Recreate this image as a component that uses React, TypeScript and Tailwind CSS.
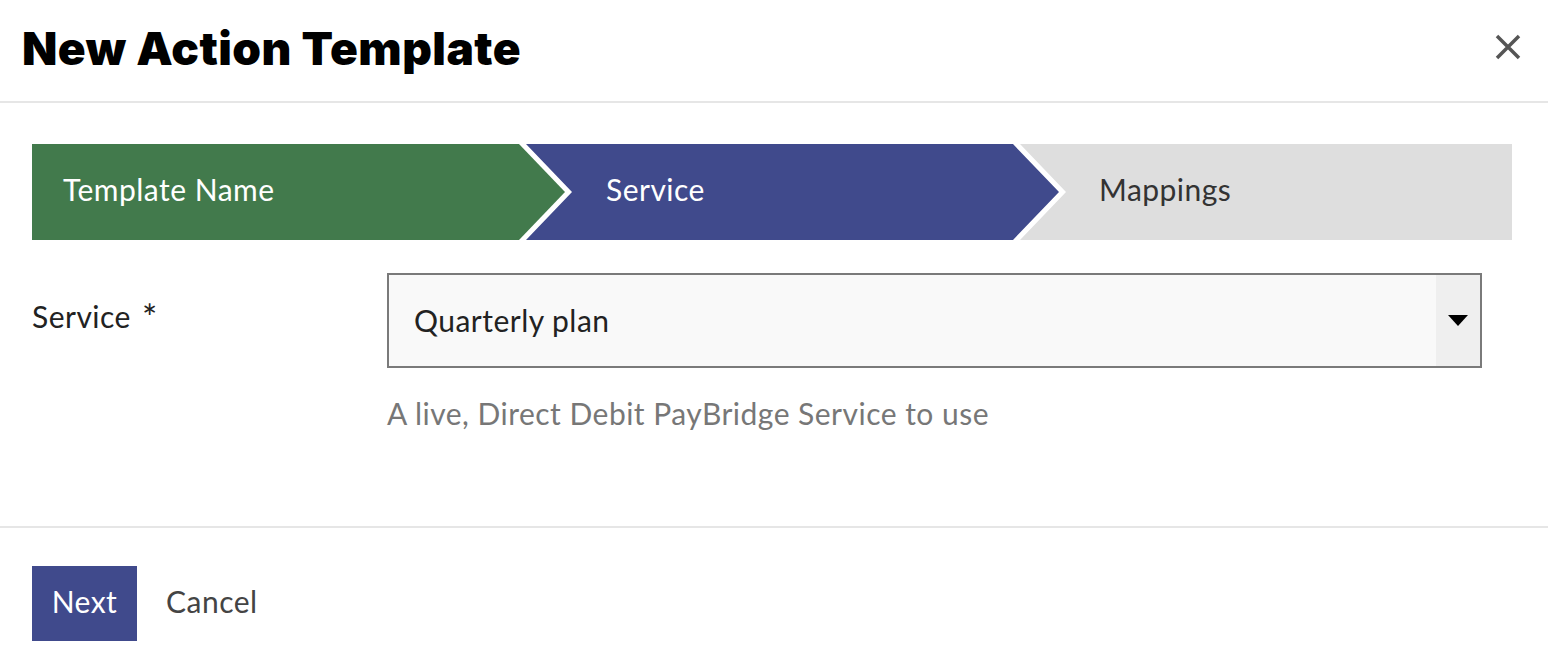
const steps = [
  { label: "Template Name", bg: "bg-[#427a4c]", text: "text-white" },
  { label: "Service", bg: "bg-[#404a8c]", text: "text-white" },
  { label: "Mappings", bg: "bg-[#dedede]", text: "text-[#333333]" },
];

const App = () => {
  return (
    <div className="min-h-screen bg-white font-['Lato','Noto_Sans',sans-serif] font-normal tracking-[0.03em] text-[#222222]">
      {/* Header */}
      <div className="flex h-[103px] items-center justify-between border-b-2 border-[#e6e6e6] pl-[22px] pr-[27px]">
        <h1 className="mb-[6px] font-['Inter',sans-serif] text-[46px] font-black leading-none tracking-[0.01em] text-black">
          New Action Template
        </h1>
        <button className="mb-[8px] text-[#555555]">
          <svg width="26" height="26" viewBox="0 0 26 26" fill="none">
            <path d="M2 2L24 24M24 2L2 24" stroke="currentColor" strokeWidth="3.5" />
          </svg>
        </button>
      </div>

      {/* Body */}
      <div className="px-[32px] pb-[96px] pt-[41px]">
        {/* Stepper */}
        <div className="flex h-[96px] pr-[4px]">
          <div
            className={`flex w-[533px] shrink-0 items-center pl-[31px] text-[30px] ${steps[0].bg} ${steps[0].text} [clip-path:polygon(0_0,calc(100%_-_46px)_0,100%_50%,calc(100%_-_46px)_100%,0_100%)]`}
          >
            <span className="-mt-[5px]">{steps[0].label}</span>
          </div>
          <div
            className={`-ml-[39px] flex w-[533px] shrink-0 items-center pl-[80px] text-[30px] ${steps[1].bg} ${steps[1].text} [clip-path:polygon(0_0,calc(100%_-_46px)_0,100%_50%,calc(100%_-_46px)_100%,0_100%,46px_50%)]`}
          >
            <span className="-mt-[5px]">{steps[1].label}</span>
          </div>
          <div
            className={`-ml-[39px] flex flex-1 items-center pl-[79px] text-[30px] ${steps[2].bg} ${steps[2].text} [clip-path:polygon(0_0,100%_0,100%_100%,0_100%,46px_50%)]`}
          >
            <span className="-mt-[5px]">{steps[2].label}</span>
          </div>
        </div>

        {/* Service field */}
        <div className="mt-[33px] flex">
          <div className="w-[355px] shrink-0 pt-[26px] text-[30px] leading-[34px] text-[#222222]">
            Service
            <span className="relative top-[3px] ml-[11px] text-[36px] leading-[0]">*</span>
          </div>
          <div className="w-[1095px]">
            <div className="flex h-[95px] border-2 border-[#7a7a7a] bg-[#f9f9f9]">
              <div className="flex flex-1 items-center pl-[25px] text-[30px] text-[#222222]">
                Quarterly plan
              </div>
              <div className="flex w-[44px] items-center justify-center bg-[#efefef]">
                <svg width="20" height="11" viewBox="0 0 20 11">
                  <polygon points="0,0 20,0 10,11" fill="#000000" />
                </svg>
              </div>
            </div>
            <p className="mt-[28px] text-[30px] leading-[34px] text-[#777777]">
              A live, Direct Debit PayBridge Service to use
            </p>
          </div>
        </div>
      </div>

      {/* Footer */}
      <div className="flex items-center gap-[29px] border-t-2 border-[#e6e6e6] px-[32px] pt-[38px]">
        <button className="h-[75px] w-[105px] bg-[#404a8c] pb-[4px] text-[30px] text-white">
          Next
        </button>
        <button className="pb-[4px] text-[30px] text-[#444444]">Cancel</button>
      </div>
    </div>
  );
};

export default App;
